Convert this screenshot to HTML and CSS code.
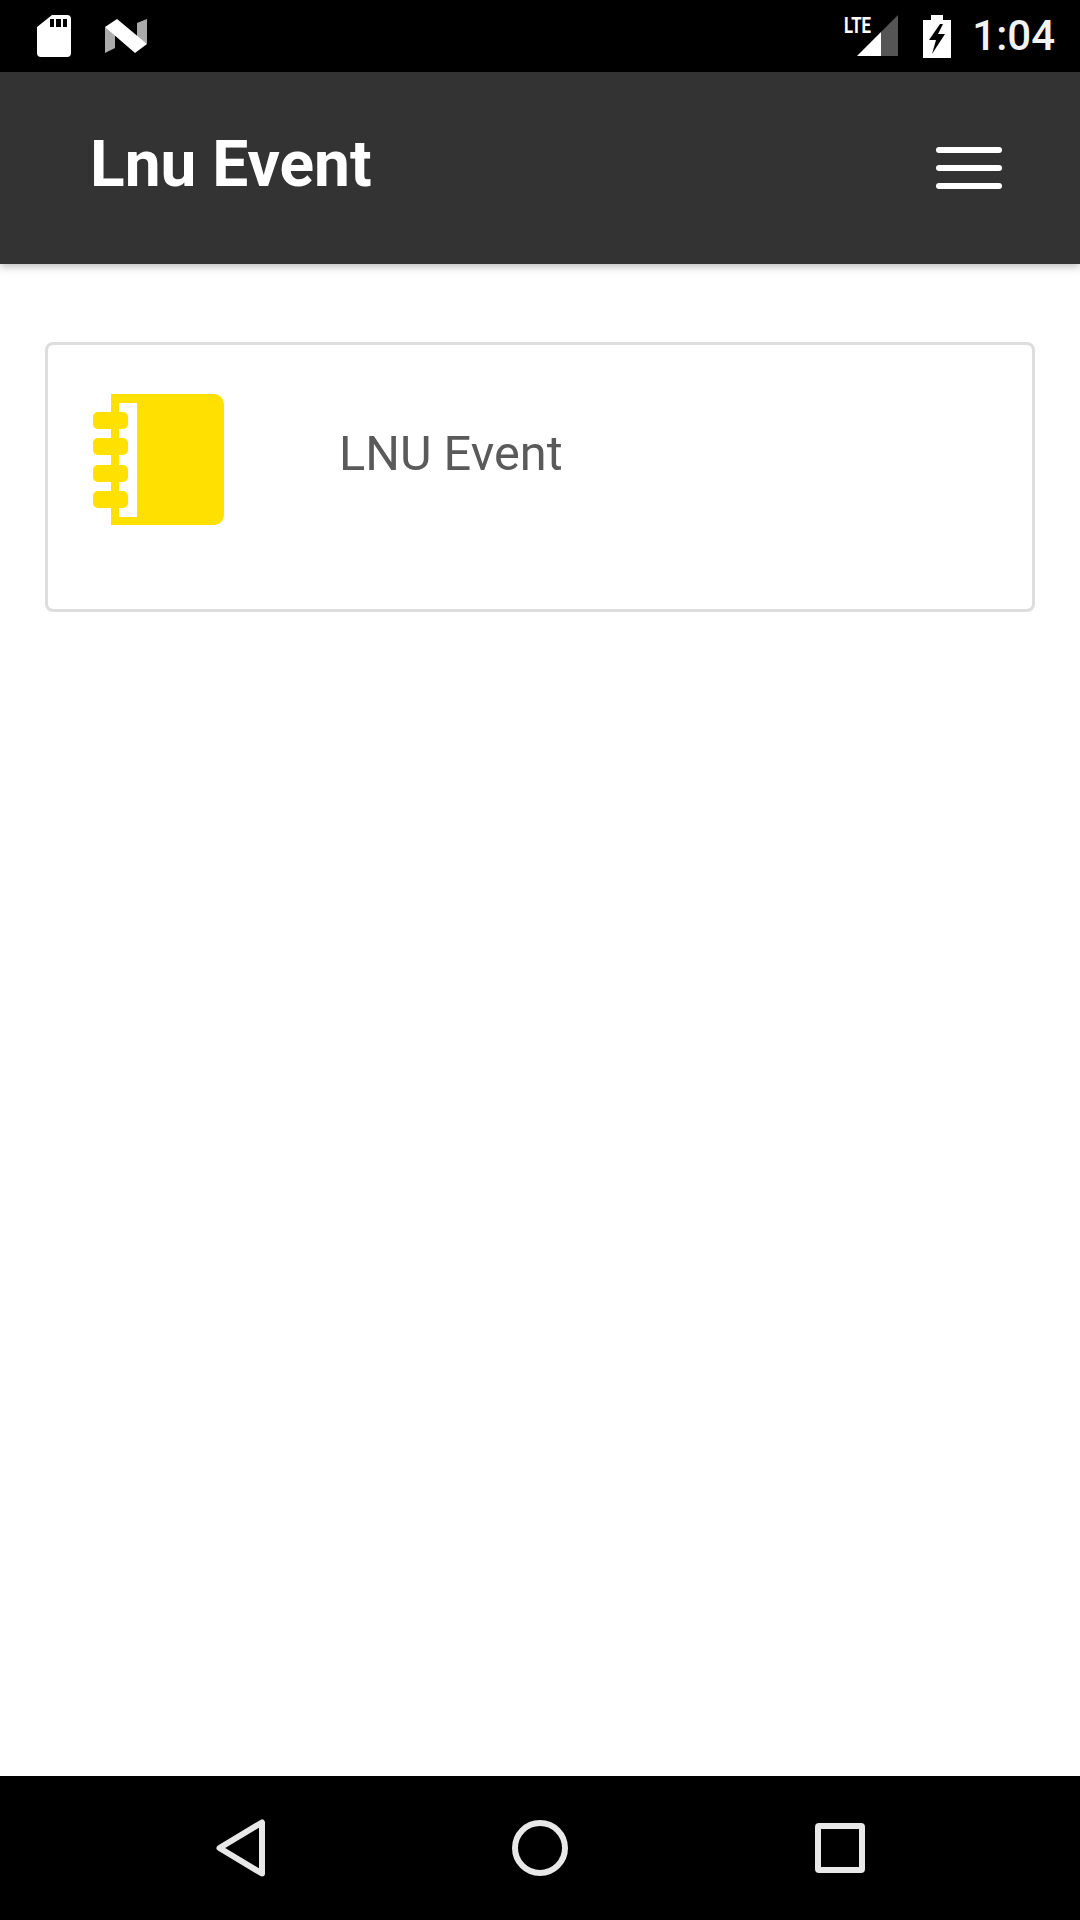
FILE: index.html
```html
<!DOCTYPE html>
<html lang="en">
<head>
    <meta charset="UTF-8">
    <meta name="viewport" content="width=device-width, initial-scale=1.0">
    <title>Lnu Event</title>
    <link rel="stylesheet" href="styles.css">
</head>
<body>
    <div class="screen">
        <div class="status-bar">
            <div class="status-left">
                <svg class="icon-sd" width="34" height="42" viewBox="0 0 34 42">
                    <path fill="#fff" fill-rule="evenodd" d="M15 0H30a4 4 0 0 1 4 4V38a4 4 0 0 1-4 4H4a4 4 0 0 1-4-4V12ZM13 4V12H17V4ZM19 4V12H24V4ZM26 4V12H30V4Z"/>
                </svg>
                <svg class="icon-n" width="42" height="34" viewBox="0 0 42 34">
                    <path fill="#aaa" d="M0 8L10 12V29L0 34Z"/>
                    <path fill="#aaa" d="M32 4L42 0V25L32 18Z"/>
                    <path fill="#fff" d="M0 8L12 0L42 25L30 34Z"/>
                </svg>
            </div>
            <div class="status-right">
                <svg class="icon-signal" width="56" height="44" viewBox="0 0 56 44">
                    <text class="lte" x="0" y="19" textLength="27" lengthAdjust="spacingAndGlyphs">LTE</text>
                    <path fill="#fff" d="M13 42L37 18V42Z"/>
                    <path fill="#555" d="M37 18L54 1V42H37Z"/>
                </svg>
                <svg class="icon-battery" width="28" height="43" viewBox="0 0 28 43">
                    <path fill="#fff" d="M8 0H20V5H28V43H0V5H8Z"/>
                    <path fill="#000" d="M17 9L6 25H13L9 39L22 19H15L20 9Z"/>
                </svg>
                <span class="clock">1:04</span>
            </div>
        </div>

        <header class="app-bar">
            <h1>Lnu Event</h1>
            <div class="menu-button">
                <span></span>
                <span></span>
                <span></span>
            </div>
        </header>

        <main class="content">
            <div class="event-card">
                <svg class="event-icon" width="131" height="131" viewBox="0 0 131 131">
                    <path fill="#ffe000" fill-rule="evenodd" d="M18 0H121a10 10 0 0 1 10 10V121a10 10 0 0 1-10 10H18ZM26 9V123H44V9Z"/>
                    <rect fill="#ffe000" x="0" y="18" width="35" height="17" rx="5"/>
                    <rect fill="#ffe000" x="0" y="44" width="35" height="17" rx="5"/>
                    <rect fill="#ffe000" x="0" y="71" width="35" height="17" rx="5"/>
                    <rect fill="#ffe000" x="0" y="97" width="35" height="17" rx="5"/>
                </svg>
                <span class="event-name">LNU Event</span>
            </div>
        </main>

        <nav class="nav-bar">
            <svg width="50" height="58" viewBox="0 0 50 58">
                <path fill="none" stroke="#e8e8e8" stroke-width="6" stroke-linejoin="round" d="M46 3.5V54.5L3.5 29Z"/>
            </svg>
            <svg class="nav-home" width="56" height="56" viewBox="0 0 56 56">
                <circle fill="none" stroke="#e8e8e8" stroke-width="6" cx="28" cy="28" r="25"/>
            </svg>
            <svg width="50" height="50" viewBox="0 0 50 50">
                <rect fill="none" stroke="#e8e8e8" stroke-width="6" stroke-linejoin="round" x="3" y="3" width="44" height="44" rx="1"/>
            </svg>
        </nav>
    </div>
</body>
</html>
```

FILE: styles.css
```css
* {
    box-sizing: border-box;
}
body {
    margin: 0;
    padding: 0;
    background-color: #fff;
    font-family: Roboto, "Liberation Sans", sans-serif;
}
.screen {
    display: flex;
    flex-direction: column;
    width: 1080px;
    height: 1920px;
    overflow: hidden;
}
.status-bar {
    display: flex;
    justify-content: space-between;
    align-items: center;
    height: 72px;
    padding: 0 25px 0 37px;
    background-color: #000;
}
.status-left {
    display: flex;
    align-items: center;
    gap: 34px;
}
.status-right {
    display: flex;
    align-items: center;
}
.icon-signal {
    margin-right: 23px;
}
.icon-battery {
    margin-right: 21px;
}
.lte {
    font-size: 22px;
    font-weight: 700;
    fill: #fff;
}
.clock {
    font-size: 42px;
    font-weight: 500;
    line-height: 72px;
    color: #f2f2f2;
}
.app-bar {
    position: relative;
    display: flex;
    justify-content: space-between;
    align-items: center;
    height: 192px;
    padding: 0 78px 0 90px;
    background-color: #333;
    box-shadow: 0 3px 8px rgba(0, 0, 0, 0.25);
}
.app-bar h1 {
    margin: 0 0 7px;
    font-size: 64px;
    font-weight: 700;
    color: #fff;
}
.menu-button {
    display: flex;
    flex-direction: column;
    gap: 12px;
    width: 66px;
}
.menu-button span {
    height: 6px;
    border-radius: 3px;
    background-color: #fff;
}
.content {
    flex: 1;
    padding: 78px 45px 0;
}
.event-card {
    display: flex;
    align-items: flex-start;
    height: 270px;
    padding: 49px 45px;
    border: 3px solid #ddd;
    border-radius: 8px;
}
.event-name {
    margin: 31px 0 0 115px;
    font-size: 48.7px;
    color: #5a5a5a;
}
.nav-bar {
    display: flex;
    justify-content: space-between;
    align-items: center;
    height: 144px;
    padding: 0 215px 0 216px;
    background-color: #000;
}
.nav-home {
    margin-right: 2px;
}
```
